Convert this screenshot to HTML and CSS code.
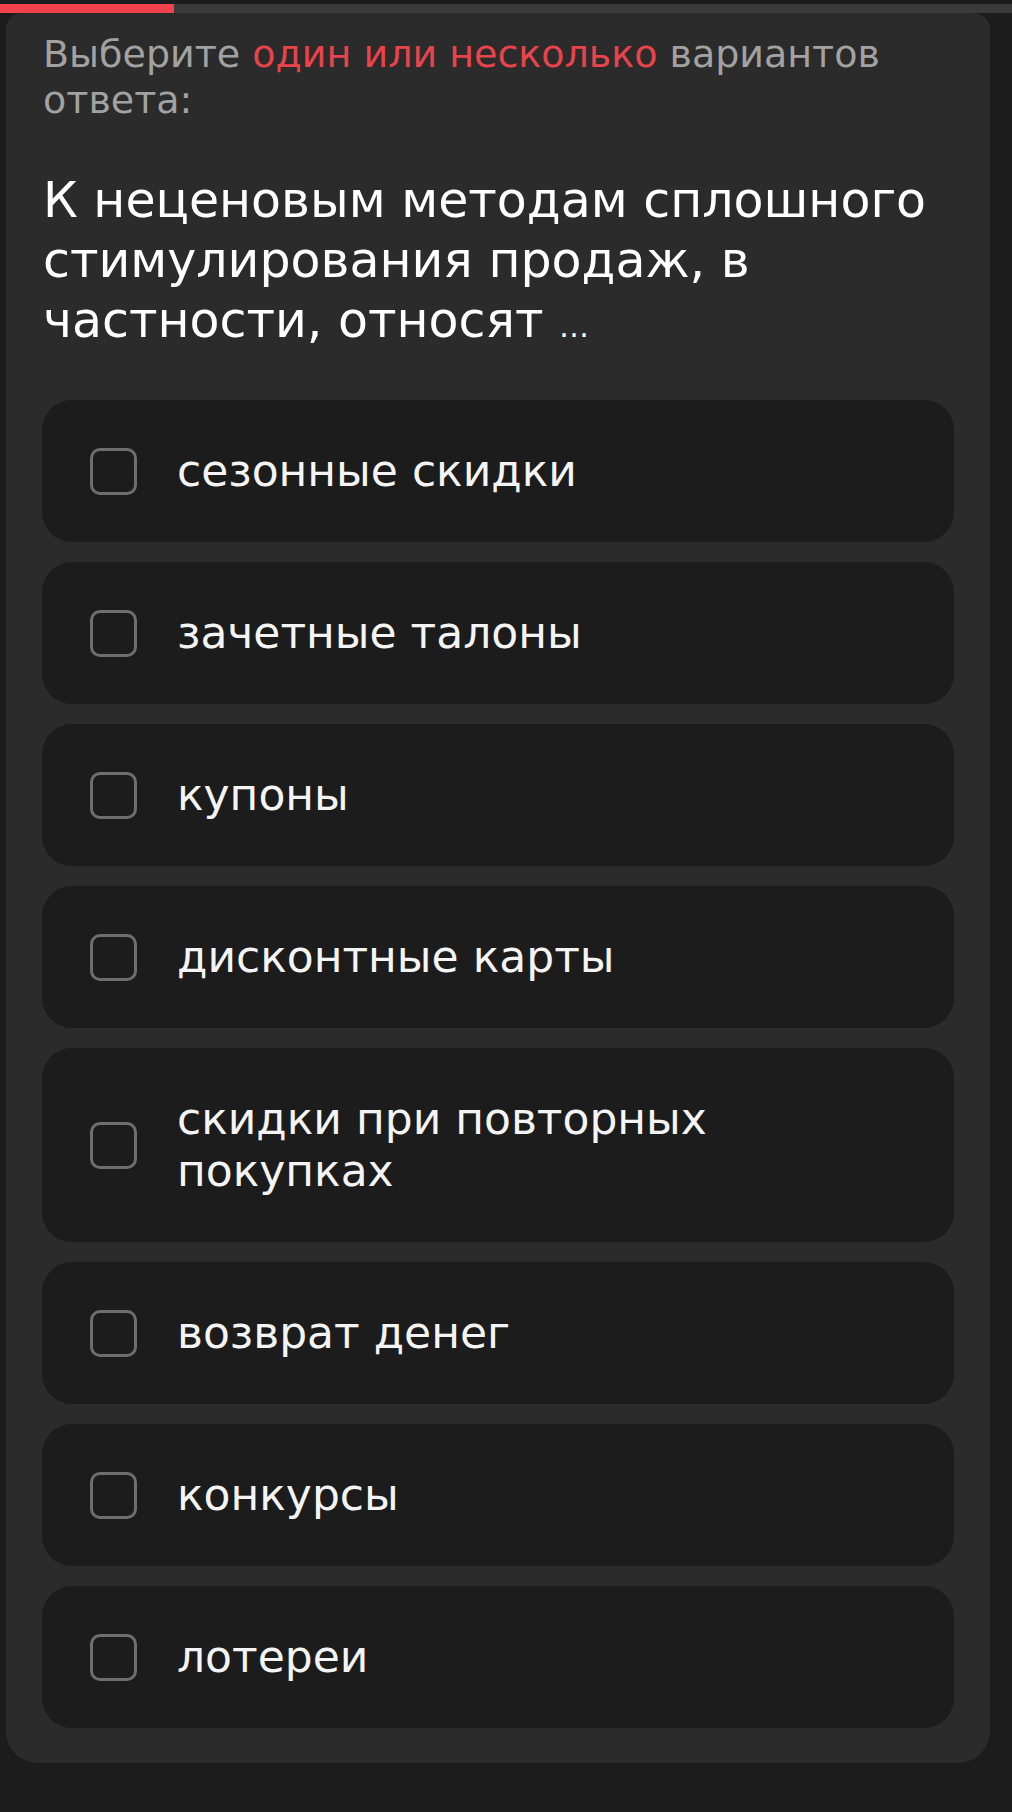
FILE: index.html
```html
<!DOCTYPE html>
<html lang="ru">
<head>
<meta charset="utf-8">
<title>Вопрос</title>
<link rel="stylesheet" href="styles.css">
</head>
<body>
<div class="progress"><div class="progress-fill"></div></div>
<main class="card">
  <p class="hint">Выберите <span class="accent">один или несколько</span> вариантов ответа:</p>
  <h1 class="question">К неценовым методам сплошного стимулирования продаж, в частности, относят <span class="ellipsis">…</span></h1>
  <ul class="options">
    <li class="option"><span class="box"></span><span class="label">сезонные скидки</span></li>
    <li class="option"><span class="box"></span><span class="label">зачетные талоны</span></li>
    <li class="option"><span class="box"></span><span class="label">купоны</span></li>
    <li class="option"><span class="box"></span><span class="label">дисконтные карты</span></li>
    <li class="option"><span class="box"></span><span class="label">скидки при повторных покупках</span></li>
    <li class="option"><span class="box"></span><span class="label">возврат денег</span></li>
    <li class="option"><span class="box"></span><span class="label">конкурсы</span></li>
    <li class="option"><span class="box"></span><span class="label">лотереи</span></li>
  </ul>
</main>
</body>
</html>
```
FILE: styles.css
```css
html, body {
  margin: 0;
  padding: 0;
  background: #1c1c1c;
}
body {
  width: 1012px;
  font-family: "DejaVu Sans", "Noto Sans", sans-serif;
}
.progress {
  margin-top: 4px;
  height: 9px;
  background: #3a3a3a;
}
.progress-fill {
  width: 174px;
  height: 100%;
  background: #f0424c;
}
.card {
  display: block;
  width: 912px;
  margin: 0 0 0 6px;
  padding: 18px 36px 35px 36px;
  background: #2b2b2b;
  border-radius: 16px 16px 32px 32px;
}
.hint {
  margin: 0 0 0 1px;
  font-size: 38px;
  line-height: 46px;
  color: #a2a2a2;
}
.accent {
  color: #e9434c;
}
.question {
  margin: 48px 0 0 1px;
  font-size: 49px;
  line-height: 60px;
  font-weight: 400;
  color: #ffffff;
}
.ellipsis {
  font-size: 30px;
  line-height: 0;
}
.options {
  list-style: none;
  margin: 49px 0 0 0;
  padding: 0;
  display: flex;
  flex-direction: column;
  gap: 20px;
}
.option {
  display: flex;
  align-items: center;
  gap: 40px;
  padding: 45px 90px 45px 48px;
  background: #1c1c1c;
  border-radius: 30px;
}
.box {
  flex: none;
  width: 41px;
  height: 41px;
  border: 3px solid #6e6e6e;
  border-radius: 10px;
}
.label {
  font-size: 44px;
  line-height: 52px;
  color: #f4f4f4;
}
```
